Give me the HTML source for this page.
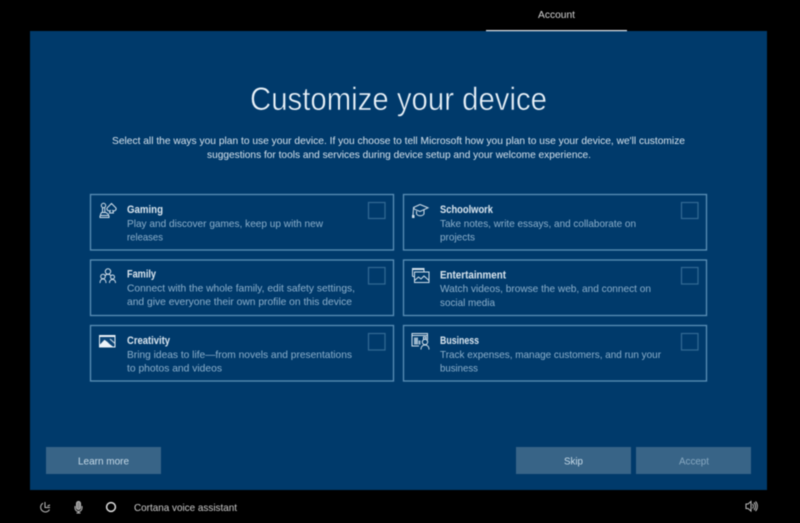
<!DOCTYPE html>
<html lang="en">
<head>
<meta charset="utf-8">
<title>Customize your device</title>
<style>
html,body{margin:0;padding:0;background:#000;width:800px;height:523px;overflow:hidden}
svg{display:block;filter:blur(.4px)}
text{font-family:"Liberation Sans",sans-serif}
.h{font-size:11px;font-weight:700;fill:#dbe7f0;stroke:#003a6b;stroke-width:.2;paint-order:stroke}
.d{font-size:10.5px;fill:#8cb0cc}
.s{font-size:10.5px;fill:#d6e3ed}
.c{fill:none;stroke:#5b8fb6;stroke-width:1.3}
.k{fill:none;stroke:#336a94;stroke-width:1.2}
.b{fill:#386487}
.i{fill:none;stroke:#d3e1ec;stroke-width:1}
.f{fill:none;stroke:#bdbdbd;stroke-width:1}
</style>
</head>
<body>
<svg width="800" height="523" viewBox="0 0 800 523" xmlns="http://www.w3.org/2000/svg">
<rect width="800" height="523" fill="#000"/>
<rect x="30" y="31" width="737" height="459" fill="#003a6b"/>

<text x="538" y="18" font-size="10.5" fill="#d4d4d4" textLength="37" lengthAdjust="spacingAndGlyphs">Account</text>
<rect x="486" y="30" width="141" height="1.2" fill="#e4e8ec"/>

<text x="250" y="110" font-size="32.5" fill="#eaf3fa" stroke="#003a6b" stroke-width=".55" textLength="297" lengthAdjust="spacingAndGlyphs">Customize your device</text>
<text class="s" x="112" y="144" textLength="573" lengthAdjust="spacingAndGlyphs">Select all the ways you plan to use your device. If you choose to tell Microsoft how you plan to use your device, we'll customize</text>
<text class="s" x="207" y="158" textLength="384" lengthAdjust="spacingAndGlyphs">suggestions for tools and services during device setup and your welcome experience.</text>

<rect class="c" x="90.5" y="194.5" width="303" height="55.5"/>
<rect class="c" x="90.5" y="260" width="303" height="55.5"/>
<rect class="c" x="90.5" y="325.5" width="303" height="55.5"/>
<rect class="c" x="403.5" y="194.5" width="303" height="55.5"/>
<rect class="c" x="403.5" y="260" width="303" height="55.5"/>
<rect class="c" x="403.5" y="325.5" width="303" height="55.5"/>

<rect class="k" x="368.5" y="202.5" width="16.5" height="16"/>
<rect class="k" x="368.5" y="267.5" width="16.5" height="16.5"/>
<rect class="k" x="368.5" y="333.5" width="16.5" height="16.5"/>
<rect class="k" x="681.5" y="202.5" width="16.5" height="16"/>
<rect class="k" x="681.5" y="267.5" width="16.5" height="16.5"/>
<rect class="k" x="681.5" y="333.5" width="16.5" height="16.5"/>

<text class="h" x="127" y="213" textLength="36" lengthAdjust="spacingAndGlyphs">Gaming</text>
<text class="d" x="127" y="227" textLength="196" lengthAdjust="spacingAndGlyphs">Play and discover games, keep up with new</text>
<text class="d" x="127" y="240.500" textLength="36" lengthAdjust="spacingAndGlyphs">releases</text>

<text class="h" x="127" y="277.500" textLength="29" lengthAdjust="spacingAndGlyphs">Family</text>
<text class="d" x="127" y="291.500" textLength="228" lengthAdjust="spacingAndGlyphs">Connect with the whole family, edit safety settings,</text>
<text class="d" x="127" y="305" textLength="225" lengthAdjust="spacingAndGlyphs">and give everyone their own profile on this device</text>

<text class="h" x="127" y="344" textLength="43" lengthAdjust="spacingAndGlyphs">Creativity</text>
<text class="d" x="127" y="358" textLength="225" lengthAdjust="spacingAndGlyphs">Bring ideas to life—from novels and presentations</text>
<text class="d" x="127" y="371.500" textLength="95" lengthAdjust="spacingAndGlyphs">to photos and videos</text>

<text class="h" x="440" y="213" textLength="53" lengthAdjust="spacingAndGlyphs">Schoolwork</text>
<text class="d" x="440" y="227" textLength="196" lengthAdjust="spacingAndGlyphs">Take notes, write essays, and collaborate on</text>
<text class="d" x="440" y="240.500" textLength="35" lengthAdjust="spacingAndGlyphs">projects</text>

<text class="h" x="440" y="278.500" textLength="66" lengthAdjust="spacingAndGlyphs">Entertainment</text>
<text class="d" x="440" y="292" textLength="211" lengthAdjust="spacingAndGlyphs">Watch videos, browse the web, and connect on</text>
<text class="d" x="440" y="306" textLength="55" lengthAdjust="spacingAndGlyphs">social media</text>

<text class="h" x="440" y="344" textLength="39" lengthAdjust="spacingAndGlyphs">Business</text>
<text class="d" x="440" y="358" textLength="221" lengthAdjust="spacingAndGlyphs">Track expenses, manage customers, and run your</text>
<text class="d" x="440" y="371.500" textLength="38" lengthAdjust="spacingAndGlyphs">business</text>

<!-- Gaming icon -->
<g class="i">
<circle cx="103.500" cy="205.500" r="2.200"/>
<path d="M102.500 207.700v4.800M104.800 207.700v4.800"/>
<path d="M101.500 212.500h4.500l2.500 2v1h-8v-1z"/>
<path d="M100 215.500v2h9v-2"/>
<path d="M111.500 203.500l4.500 4.500a2.200 2.200 0 0 1-3.200 2.600l.6 2.400h-3.800l.6-2.400a2.200 2.200 0 0 1-3.200-2.600z"/>
</g>
<!-- Family icon -->
<g class="i">
<circle cx="108" cy="271.500" r="2.700"/>
<circle cx="103" cy="276.500" r="2.300"/>
<circle cx="112.500" cy="277" r="2"/>
<path d="M100 283c0-2.500 1.200-4 3-4s3 1.500 3 4"/>
<path d="M105 276c.6-1.200 1.600-1.800 3-1.800s2.400.6 3 1.700"/>
<path d="M109.500 283c0-2 1.200-3.500 3-3.500s3 1.500 3 3.500"/>
</g>
<!-- Creativity icon -->
<rect x="99.500" y="335.500" width="15.500" height="11.500" fill="#0b4476" stroke="#e6eef4" stroke-width="1"/>
<path d="M99.500 347v-2l5-5.200 3 2.200 2 2 4 3z" fill="#edf3f8"/>
<path d="M99.500 335.500h15.500v1.500h-15.500z" fill="#edf3f8"/>
<path d="M110 339l5 4.500" stroke="#d3e1ec" stroke-width="1" fill="none"/>
<!-- Schoolwork icon -->
<g class="i">
<path d="M420 204.500l8 3.300-8 3.700-5.500-2.300"/>
<path d="M420 204.500l-6.500 3 1 1.700"/>
<path d="M416.500 211v3c1 1.300 2.300 1.800 3.800 1.800s2.700-.5 3.700-1.800v-4"/>
<path d="M413.500 208l-.5 7.500"/>
</g>
<rect x="412" y="215" width="2.500" height="3" fill="#d3e1ec"/>
<!-- Entertainment icon -->
<g class="i">
<path d="M412.500 276.500v-8h11.500v3"/>
<rect x="414.500" y="272" width="14.500" height="10.500"/>
</g>
<path d="M412.500 268.500h11.500v1.500h-11.500z" fill="#d3e1ec"/>
<path d="M414.500 280.500l4-3.500 2.500 2 3-3 5 4.500" class="i"/>
<path d="M412.500 276.500h2" class="i"/>
<!-- Business icon -->
<g class="i">
<path d="M427.500 340v-6.500h-15.500v12.500h7"/>
<path d="M412 335.500h15.500"/>
<circle cx="425" cy="342" r="2.700"/>
<path d="M421 349.500c0-2.800 1.500-4.500 4-4.500s4 1.700 4 4.500"/>
<path d="M423.500 337h2.500v2h-2.500z"/>
</g>
<rect x="414" y="337.500" width="4" height="7" fill="#9db8cd"/>
<rect x="418.500" y="340.500" width="2" height="4" fill="#9db8cd"/>

<rect class="b" x="46" y="447" width="115" height="27"/>
<rect class="b" x="516" y="447" width="115" height="27"/>
<rect class="b" x="636" y="447" width="115" height="27"/>
<text x="78" y="464.500" font-size="10.500" fill="#c8dbe8" textLength="51" lengthAdjust="spacingAndGlyphs">Learn more</text>
<text x="564" y="464.500" font-size="10.500" fill="#c8dbe8" textLength="19" lengthAdjust="spacingAndGlyphs">Skip</text>
<text x="679" y="464.500" font-size="10.500" fill="#87a8c1" textLength="30" lengthAdjust="spacingAndGlyphs">Accept</text>

<!-- Ease of access -->
<g class="f">
<path d="M45 502v5.500h5"/>
<path d="M43 503.200a4.700 4.700 0 1 0 6.500 6.300"/>
<path d="M47.500 506l2.500-1"/>
</g>
<!-- Mic -->
<g class="f">
<rect x="76.500" y="501.500" width="4" height="8" rx="2" fill="#8a8a8a"/>
<path d="M75 506v2a3.500 3.500 0 0 0 7 0v-2"/>
<path d="M78.500 511.500v1.500M76.500 513h4"/>
</g>
<!-- Cortana -->
<circle cx="111" cy="507" r="4.400" fill="none" stroke="#e0e0e0" stroke-width="1.500"/>
<text x="134" y="511" font-size="10.500" fill="#cccccc" textLength="103" lengthAdjust="spacingAndGlyphs">Cortana voice assistant</text>
<!-- Speaker -->
<g class="f" stroke-width=".8">
<path d="M746 504h2l3-2.500v9.500l-3-2.500h-2z"/>
<path d="M752.500 504a3.500 3.500 0 0 1 0 4.500"/>
<path d="M754 502.500a5.500 5.500 0 0 1 0 7.500"/>
<path d="M755.500 501.500a7 7 0 0 1 0 9.500"/>
</g>
</svg>
</body>
</html>
